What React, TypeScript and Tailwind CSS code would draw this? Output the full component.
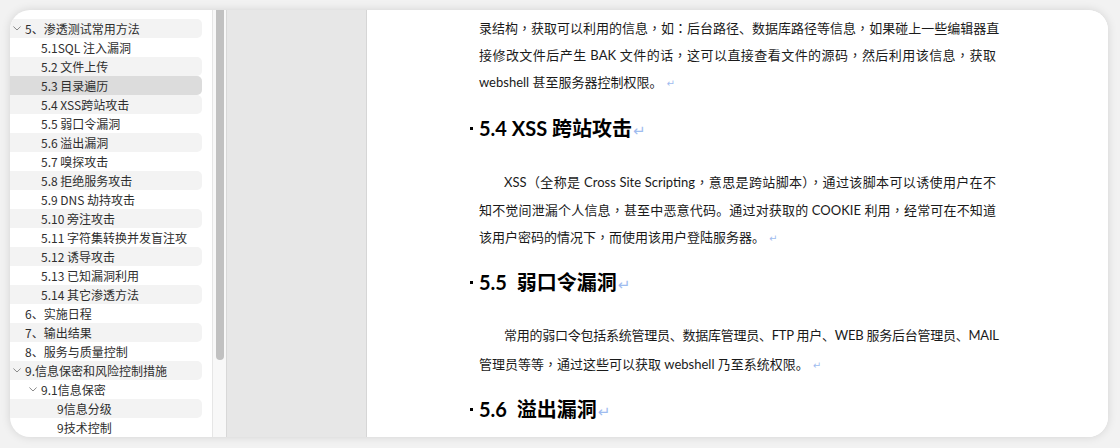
import React from 'react';

interface TocItem {
    label: string;
    level: number;
    chevron?: boolean;
}

const tocItems: TocItem[] = [
    { label: '5、渗透测试常用方法', level: 0, chevron: true },
    { label: '5.1SQL 注入漏洞', level: 1 },
    { label: '5.2 文件上传', level: 1 },
    { label: '5.3 目录遍历', level: 1 },
    { label: '5.4 XSS跨站攻击', level: 1 },
    { label: '5.5 弱口令漏洞', level: 1 },
    { label: '5.6 溢出漏洞', level: 1 },
    { label: '5.7 嗅探攻击', level: 1 },
    { label: '5.8 拒绝服务攻击', level: 1 },
    { label: '5.9 DNS 劫持攻击', level: 1 },
    { label: '5.10 旁注攻击', level: 1 },
    { label: '5.11 字符集转换并发盲注攻', level: 1 },
    { label: '5.12 诱导攻击', level: 1 },
    { label: '5.13 已知漏洞利用', level: 1 },
    { label: '5.14 其它渗透方法', level: 1 },
    { label: '6、实施日程', level: 0 },
    { label: '7、输出结果', level: 0 },
    { label: '8、服务与质量控制', level: 0 },
    { label: '9.信息保密和风险控制措施', level: 0, chevron: true },
    { label: '9.1信息保密', level: 1, chevron: true },
    { label: '9信息分级', level: 2 },
    { label: '9技术控制', level: 2 },
];

const SELECTED = 3;

const Chevron = () => (
    <svg width="8" height="5" viewBox="0 0 8 5" fill="none">
        <path d="M0.7 0.8 L4 4 L7.3 0.8" stroke="#8a8a8a" strokeWidth="1" strokeLinecap="round" strokeLinejoin="round" />
    </svg>
);

const Ret = ({ big }: { big?: boolean }) => (
    <span
        className={
            big
                ? 'ml-[1px] text-[15px] font-normal text-[#9fbcef] [font-family:"DejaVu_Sans",sans-serif]'
                : 'ml-[4px] text-[10px] text-[#9fbcef] [font-family:"DejaVu_Sans",sans-serif]'
        }
    >
        ↵
    </span>
);

// Word centres full-width commas and colons; Noto TC does the same
const fmt = (text: string) =>
    text.split(/([，：])/).map((part, i) =>
        part === '，' || part === '：' ? (
            <span key={i} className="[font-family:'Noto_Sans_CJK_TC',sans-serif]">
                {part}
            </span>
        ) : (
            part
        )
    );

const docFont = '[font-family:Lato,"Noto_Sans_CJK_SC",sans-serif]';

const Line = ({
    text,
    full,
    indent,
    tight,
    ret,
}: {
    text: string;
    full?: boolean;
    indent?: boolean;
    tight?: boolean;
    ret?: boolean;
}) => (
    <div
        className={`whitespace-nowrap h-[27.4px] leading-[27.4px] ${full ? 'text-justify [text-align-last:justify]' : ''} ${
            indent ? 'pl-[25px]' : ''
        } ${tight ? 'tracking-[-0.25px]' : ''}`}
    >
        {fmt(text)}
        {ret && <Ret />}
    </div>
);

const Heading = ({ children }: { children: React.ReactNode }) => (
    <div className="relative mt-[16px] mb-[24px] h-[32px] leading-[32px] text-[20px] font-bold text-black">
        <span className="absolute left-[-9px] top-[15px] w-[3px] h-[3px] bg-black" />
        {children}
        <Ret big />
    </div>
);

export default function App() {
    return (
        <div className="w-[1120px] h-[448px] bg-[#f2f2f2] pt-[10px] pl-[10px] pr-[12px] pb-[11px]">
            <div className="flex h-full rounded-[20px] overflow-hidden bg-white shadow-[0_0_10px_rgba(0,0,0,0.13)]">
                {/* outline sidebar */}
                <div className="w-[202px] shrink-0 pt-[9px] pr-[10px] text-[12px] text-[#2e2e2e] [font-family:'Noto_Sans_CJK_SC',sans-serif]">
                    {tocItems.map((item, i) => (
                        <div
                            key={item.label}
                            className={`flex items-center h-[19px] rounded-r-[5px] ${
                                i === SELECTED ? 'bg-[#dcdcdc]' : i % 2 === 0 ? 'bg-[#f3f3f3]' : ''
                            } ${item.level === 0 ? 'pl-[3px]' : item.level === 1 ? 'pl-[19px]' : 'pl-[35px]'}`}
                        >
                            <span className="w-[12px] flex items-center">{item.chevron && <Chevron />}</span>
                            <span className="whitespace-nowrap leading-[19px]">{item.label}</span>
                        </div>
                    ))}
                </div>

                {/* scrollbar */}
                <div className="w-[15px] shrink-0 border-l border-[#e6e6e6] border-r border-r-[#d8d8d8] bg-[#f8f8f8] pl-[3px]">
                    <div className="w-[8px] h-[350px] rounded-b-full bg-[#c1c1c1]" />
                </div>

                {/* page margin */}
                <div className="w-[140px] shrink-0 bg-[#e7e7e7] border-r border-[#d6d6d6]" />

                {/* document page */}
                <div className={`flex-1 bg-white pl-[112px] pt-[4px] text-[13px] text-[#1a1a1a] ${docFont}`}>
                    <div className="w-[517px]">
                        <Line full text="录结构，获取可以利用的信息，如：后台路径、数据库路径等信息，如果碰上一些编辑器直" />
                        <Line full text="接修改文件后产生 BAK 文件的话，这可以直接查看文件的源码，然后利用该信息，获取" />
                        <Line ret text="webshell 甚至服务器控制权限。" />

                        <Heading>5.4 XSS 跨站攻击</Heading>

                        <Line full indent text="XSS（全称是 Cross Site Scripting，意思是跨站脚本），通过该脚本可以诱使用户在不" />
                        <Line full text="知不觉间泄漏个人信息，甚至中恶意代码。通过对获取的 COOKIE 利用，经常可在不知道" />
                        <Line ret text="该用户密码的情况下，而使用该用户登陆服务器。" />

                        <Heading>5.5&nbsp; 弱口令漏洞</Heading>

                        <Line full indent tight text="常用的弱口令包括系统管理员、数据库管理员、FTP 用户、WEB 服务后台管理员、MAIL" />
                        <Line ret text="管理员等等，通过这些可以获取 webshell 乃至系统权限。" />

                        <Heading>5.6&nbsp; 溢出漏洞</Heading>
                    </div>
                </div>
            </div>
        </div>
    );
}
